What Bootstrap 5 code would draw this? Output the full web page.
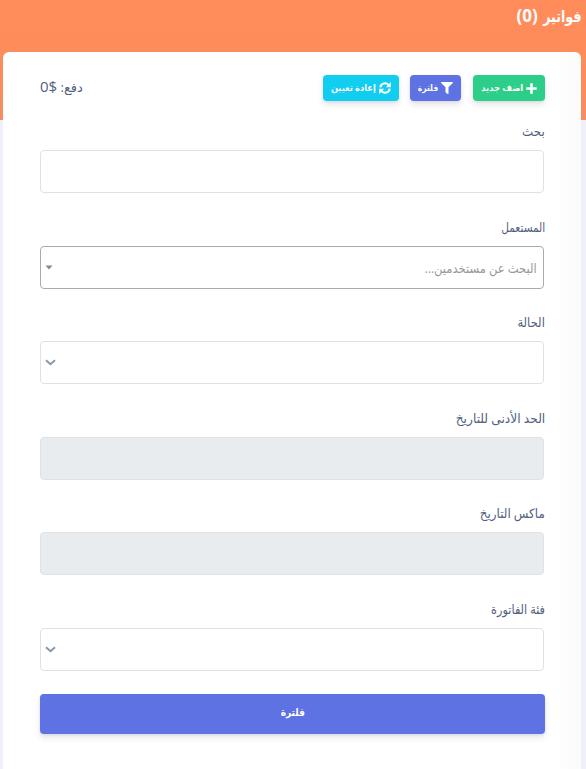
<!DOCTYPE html>
<html lang="ar" dir="rtl">
<head>
<meta charset="utf-8">
<meta name="viewport" content="width=device-width, initial-scale=1">
<title>فواتير</title>
<link rel="stylesheet" href="https://cdn.jsdelivr.net/npm/bootstrap@5.3.0/dist/css/bootstrap.min.css">
<style>
body{background:#eff0f8;font-family:"Open Sans","DejaVu Sans",sans-serif;color:#525f7f;overflow:hidden}
.page-shell{height:769px;background:linear-gradient(#ff8c5a 0,#ff8c5a 24px,#f68e60 120px,transparent 120px);padding:0 5px 0 3px}
.page-title{height:52px;padding-top:5px;font-size:18px;line-height:20px;font-weight:600;color:#fff}
.title-count{font-size:17px;font-weight:700}
.invoice-card{height:717px;border:0;border-radius:6px 6px 0 0;padding:23px 36px 0 37px;background:linear-gradient(to left,#fbfbfb,#fff 28px)}
.toolbar{height:45px}
.fit{display:inline-block;white-space:nowrap;transform:scaleX(var(--sx));transform-origin:right center}
.t-title{--sx:.79;font-size:16px;margin-left:-10px}
.t-add{--sx:.93;margin-left:-3px}
.t-filter{--sx:.84;margin-left:-4px}
.t-reset{--sx:.92;margin-left:-4px}
.t-user{--sx:.81}
.t-state{--sx:.89}
.t-min{--sx:.94}
.t-max{--sx:.92}
.t-cat{--sx:.87}
.t-q{--sx:.92}
.t-search{--sx:.89}
.t-submit{--sx:.82;transform-origin:center}
.btn-tool{height:26px;padding:0 8px;border:0;border-radius:4px;color:#fff!important;font-size:9px;font-weight:700;line-height:24px;gap:3px;box-shadow:0 4px 6px rgba(50,50,93,.11),0 1px 3px rgba(0,0,0,.08)}
.btn-tool svg{flex:none}
.btn-add{width:72px;background:#2dce89!important}
.btn-filter{width:51px;background:#5e72e4!important;margin:0 12px 0 11px}
.btn-reset{width:76px;background:#11cdef!important}
.paid{font-size:13px;line-height:22px}
.paid b{font-weight:400;font-size:15px}
.field{height:95.6px}
.field label{height:30px;line-height:20px;font-size:13px;display:block;padding-top:1px}
.field .form-control,.field .form-select{width:504px;height:43px;margin-right:1px;border:1px solid #dee2e6;border-radius:4px;background-color:#fff;box-shadow:none}
.field .form-control:disabled{background:#e9ecef;border-color:#dee2e6}
.field .form-select{background-image:none}
.select-wrap{display:grid}
.select-wrap>*{grid-area:1/1}
.select-wrap svg{justify-self:end;align-self:center;margin-left:5px;z-index:1}
.field .user-select{border-color:#aaa!important;color:#999;font-size:13px;padding:3px 6px 0 5px}
.btn-submit{height:40px;border:0;border-radius:4px;background:#5e72e4!important;color:#fff!important;font-size:11px;font-weight:600;padding:0 0 2px;box-shadow:0 4px 6px rgba(50,50,93,.11),0 1px 3px rgba(0,0,0,.08)}
</style>
<script src="https://cdn.jsdelivr.net/npm/bootstrap@5.3.0/dist/js/bootstrap.bundle.min.js"></script>
</head>
<body>
<main class="page-shell">
<h1 class="page-title m-0"><span class="fit t-title">فواتير</span> <span class="title-count">(0)</span></h1>
<section class="card invoice-card">
<div class="toolbar d-flex justify-content-between align-items-start flex-shrink-0">
<div class="d-flex">
<a href="#" class="btn btn-tool btn-add d-flex align-items-center justify-content-center text-nowrap"><svg width="11" height="11" viewBox="0 0 10 10" fill="#fff"><path d="M3.9.3h2.2v3.6h3.6v2.2H6.1v3.6H3.9V6.1H.3V3.9h3.6z"/></svg><span class="fit t-add">اضف جديد</span></a>
<a href="#" class="btn btn-tool btn-filter d-flex align-items-center justify-content-center text-nowrap"><svg width="12" height="12" viewBox="0 0 512 512" fill="#fff"><path d="M488 0H24C3 0-7 26 7 41l185 185v206c0 8 4 15 10 20l80 56c16 11 38 0 38-20V226L505 41c15-15 4-41-17-41z"/></svg><span class="fit t-filter">فلترة</span></a>
<a href="#" class="btn btn-tool btn-reset d-flex align-items-center justify-content-center text-nowrap"><svg width="12" height="12" viewBox="0 0 12 12" fill="none" stroke="#fff" stroke-width="2"><path d="M1.3 5.4A4.7 4.7 0 0 1 9.7 3.1M10.7 6.6A4.7 4.7 0 0 1 2.3 8.9"/><path d="M12 .1v5.2H6.8zM0 11.9V6.7h5.2z" fill="#fff" stroke="none"/></svg><span class="fit t-reset">إعادة تعيين</span></a>
</div>
<div class="paid">دفع: <b>$0</b></div>
</div>
<div class="field"><label for="q"><span class="fit t-q">بحث</span></label><input id="q" class="form-control"></div>
<div class="field"><label><span class="fit t-user">المستعمل</span></label><div class="select-wrap"><div class="form-control user-select d-flex align-items-center"><span class="fit t-search">البحث عن مستخدمين...</span></div><svg width="8" height="5" viewBox="0 0 8 5"><path d="M.5.5h7L4 4.5z" fill="#888"/></svg></div></div>
<div class="field"><label for="s"><span class="fit t-state">الحالة</span></label><div class="select-wrap"><select id="s" class="form-select"><option></option></select><svg width="11" height="7" viewBox="0 0 11 7"><path d="M1 1.2l4.5 4 4.5-4" fill="none" stroke="#8898aa" stroke-width="2"/></svg></div></div>
<div class="field"><label for="d1"><span class="fit t-min">الحد الأدنى للتاريخ</span></label><input id="d1" class="form-control" disabled></div>
<div class="field"><label for="d2"><span class="fit t-max">ماكس التاريخ</span></label><input id="d2" class="form-control" disabled></div>
<div class="field"><label for="c"><span class="fit t-cat">فئة الفاتورة</span></label><div class="select-wrap"><select id="c" class="form-select"><option></option></select><svg width="11" height="7" viewBox="0 0 11 7"><path d="M1 1.2l4.5 4 4.5-4" fill="none" stroke="#8898aa" stroke-width="2"/></svg></div></div>
<button class="btn btn-submit w-100"><span class="fit t-submit">فلترة</span></button>
</section>
</main>
</body>
</html>
